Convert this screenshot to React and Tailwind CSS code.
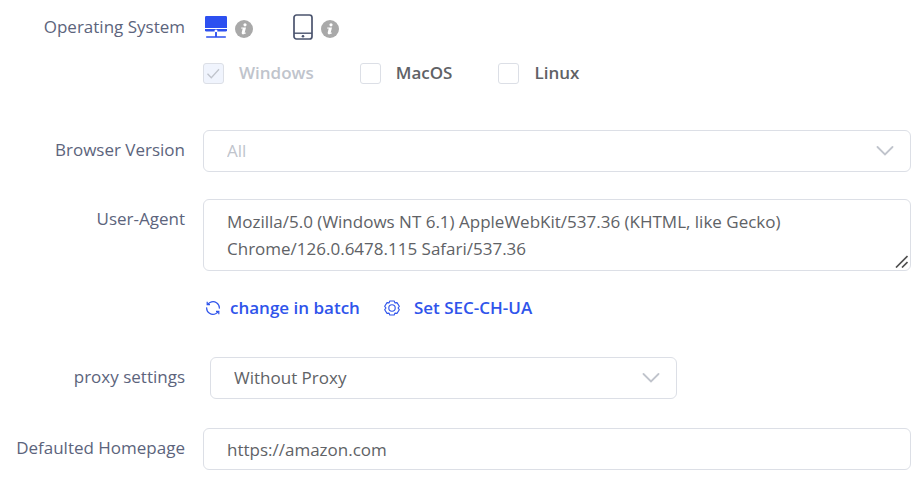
import React from "react";

const fieldClass =
  "block w-full rounded-md border border-[#dcdfe6] bg-white px-[23px] text-[17px] text-[#606266] outline-none";

function Row({ label, htmlFor, labelId, className = "", children }) {
  const Tag = htmlFor ? "label" : "div";
  return (
    <div className={`flex items-start gap-[18px] ${className}`}>
      <Tag
        id={labelId}
        htmlFor={htmlFor}
        className="w-[185px] shrink-0 text-right text-[17px] leading-10 text-[#5c647c]"
      >
        {label}
      </Tag>
      <div className="min-w-0 flex-1">{children}</div>
    </div>
  );
}

function InfoIcon() {
  return (
    <svg width="18" height="18" viewBox="0 0 18 18" aria-hidden="true">
      <circle cx="9" cy="9" r="9" fill="#a9a9a9" />
      <circle cx="10" cy="4.8" r="1.6" fill="#fff" />
      <path
        d="M6.3 7.4H11L9.7 12.4Q9.7 13 11.1 12.6L10.8 13.6Q6.2 15.6 6.7 12.6L7.7 8.6H6Z"
        fill="#fff"
      />
    </svg>
  );
}

function DesktopIcon() {
  return (
    <svg width="22" height="24" viewBox="0 0 22 24" fill="#2d50f0" aria-hidden="true">
      <path d="M1.2 1H20.8Q22 1 22 2.2V13H0V2.2Q0 1 1.2 1Z" />
      <path d="M0 14H22V15.2Q22 16.6 20.6 16.6H1.4Q0 16.6 0 15.2Z" />
      <path d="M10.3 16H11.7V21.2H20.4Q21 21.2 21 22Q21 22.8 20.4 22.8H1.6Q1 22.8 1 22Q1 21.2 1.6 21.2H10.3Z" />
      <circle cx="11" cy="16" r="1.5" fill="#fff" />
      <path d="M10.2 17H11.8V22H10.2Z" />
    </svg>
  );
}

function PhoneIcon() {
  return (
    <svg width="20" height="26" viewBox="0 0 20 26" fill="none" stroke="#4b546e" aria-hidden="true">
      <rect x="1" y="1" width="18" height="24" rx="2.5" strokeWidth="1.7" />
      <path d="M1 19.2H19" strokeWidth="1.4" />
      <circle cx="10" cy="22.2" r="1.3" fill="#4b546e" stroke="none" />
    </svg>
  );
}

function Chevron() {
  return (
    <svg
      className="pointer-events-none absolute top-1/2 right-[17px] -translate-y-1/2"
      width="18"
      height="10"
      viewBox="0 0 18 10"
      fill="none"
      stroke="#c0c4cc"
      strokeWidth="1.8"
      strokeLinecap="round"
      aria-hidden="true"
    >
      <path d="M1.5 1L9 8.5L16.5 1" />
    </svg>
  );
}

function RefreshIcon() {
  return (
    <svg width="16" height="16" viewBox="0 0 16 16" fill="none" stroke="#2f54eb" strokeWidth="1.2" aria-hidden="true">
      <path d="M14.3 8.6A6.2 6.2 0 0 0 5 2.6L2.2 4.6" />
      <path d="M1.7 7.4A6.2 6.2 0 0 0 11 13.4L13.8 11.4" />
      <path d="M2.2 1.8V4.6H5" />
      <path d="M13.8 14.2V11.4H11" />
    </svg>
  );
}

function GearIcon() {
  return (
    <svg width="16" height="16" viewBox="0 0 16 16" fill="none" stroke="#2f54eb" strokeWidth="1.1" strokeLinejoin="round" aria-hidden="true">
      <path d="M5.8 1H10.2L10.9 2.9L13 2.6L15.3 6.3L14 8L15.3 9.7L13 13.4L10.9 13.1L10.2 15H5.8L5.1 13.1L3 13.4L.7 9.7L2 8L.7 6.3L3 2.6L5.1 2.9Z" />
      <circle cx="8" cy="8" r="3.2" />
    </svg>
  );
}

function SystemOption({ name, checked, disabled }) {
  return (
    <label
      className={`flex items-center gap-[15px] text-[17px] leading-6 font-semibold ${
        disabled ? "text-[#c0c4cc]" : "text-[#606266]"
      }`}
    >
      <span className="relative block size-[21px]">
        <input
          type="checkbox"
          defaultChecked={checked}
          disabled={disabled}
          className="peer block size-[21px] appearance-none rounded-[3px] border border-[#dcdfe6] bg-white disabled:bg-[#f0f4fd]"
        />
        <svg
          className="pointer-events-none absolute inset-0 hidden peer-checked:block"
          viewBox="0 0 21 21"
          fill="none"
          stroke="#c0c4cc"
          strokeWidth="1.3"
          aria-hidden="true"
        >
          <path d="M4.5 10.8L8.3 14.8L16 6.2" />
        </svg>
      </span>
      {name}
    </label>
  );
}

export default function App() {
  return (
    <form className="bg-white pt-[7px] pr-[13px] pb-6 font-['Open_Sans',sans-serif]">
      <Row label="Operating System" labelId="os-label">
        <div role="group" aria-labelledby="os-label">
          <div className="flex h-10 items-center gap-10">
            <div className="flex items-center gap-2 pl-[2px]">
              <button type="button" aria-label="Desktop">
                <DesktopIcon />
              </button>
              <span className="pt-1">
                <InfoIcon />
              </span>
            </div>
            <div className="flex items-center gap-2">
              <button type="button" aria-label="Mobile">
                <PhoneIcon />
              </button>
              <span className="pt-1">
                <InfoIcon />
              </span>
            </div>
          </div>
          <div className="mt-[14px] flex items-center gap-[46px]">
            <SystemOption name="Windows" checked disabled />
            <SystemOption name="MacOS" />
            <SystemOption name="Linux" />
          </div>
        </div>
      </Row>

      <Row label="Browser Version" htmlFor="version" className="mt-[45px]">
        <div className="relative">
          <select id="version" className={`${fieldClass} h-[42px] appearance-none text-[#c0c4cc]!`}>
            <option>All</option>
          </select>
          <Chevron />
        </div>
      </Row>

      <Row label="User-Agent" htmlFor="agent" className="mt-[27px]">
        <div className="relative">
          <textarea
            id="agent"
            rows={2}
            className={`${fieldClass} h-[72px] resize-none overflow-hidden py-2 leading-[27px]`}
            defaultValue="Mozilla/5.0 (Windows NT 6.1) AppleWebKit/537.36 (KHTML, like Gecko) Chrome/126.0.6478.115 Safari/537.36"
          />
          <svg
            className="pointer-events-none absolute right-[3px] bottom-[3px]"
            width="13"
            height="13"
            viewBox="0 0 13 13"
            stroke="#505050"
            strokeWidth="1.7"
            aria-hidden="true"
          >
            <path d="M1 12.5L12.5 1M7 12.5L12.5 7" />
          </svg>
        </div>
        <div className="mt-6 flex items-center gap-6 pl-[2px] text-[17px] leading-[26px] font-semibold text-[#2f54eb]">
          <button type="button" className="flex items-center gap-[9px]">
            <RefreshIcon />
            change in batch
          </button>
          <button type="button" className="flex items-center gap-[14px]">
            <GearIcon />
            Set SEC-CH-UA
          </button>
        </div>
      </Row>

      <Row label="proxy settings" htmlFor="proxy" className="mt-9">
        <div className="relative ml-[7px] w-2/3 max-w-[467px]">
          <select id="proxy" className={`${fieldClass} h-[42px] appearance-none`}>
            <option>Without Proxy</option>
          </select>
          <Chevron />
        </div>
      </Row>

      <Row label="Defaulted Homepage" htmlFor="homepage" className="mt-[29px]">
        <input
          id="homepage"
          type="text"
          defaultValue="https://amazon.com"
          className={`${fieldClass} h-[42px]`}
        />
      </Row>
    </form>
  );
}
